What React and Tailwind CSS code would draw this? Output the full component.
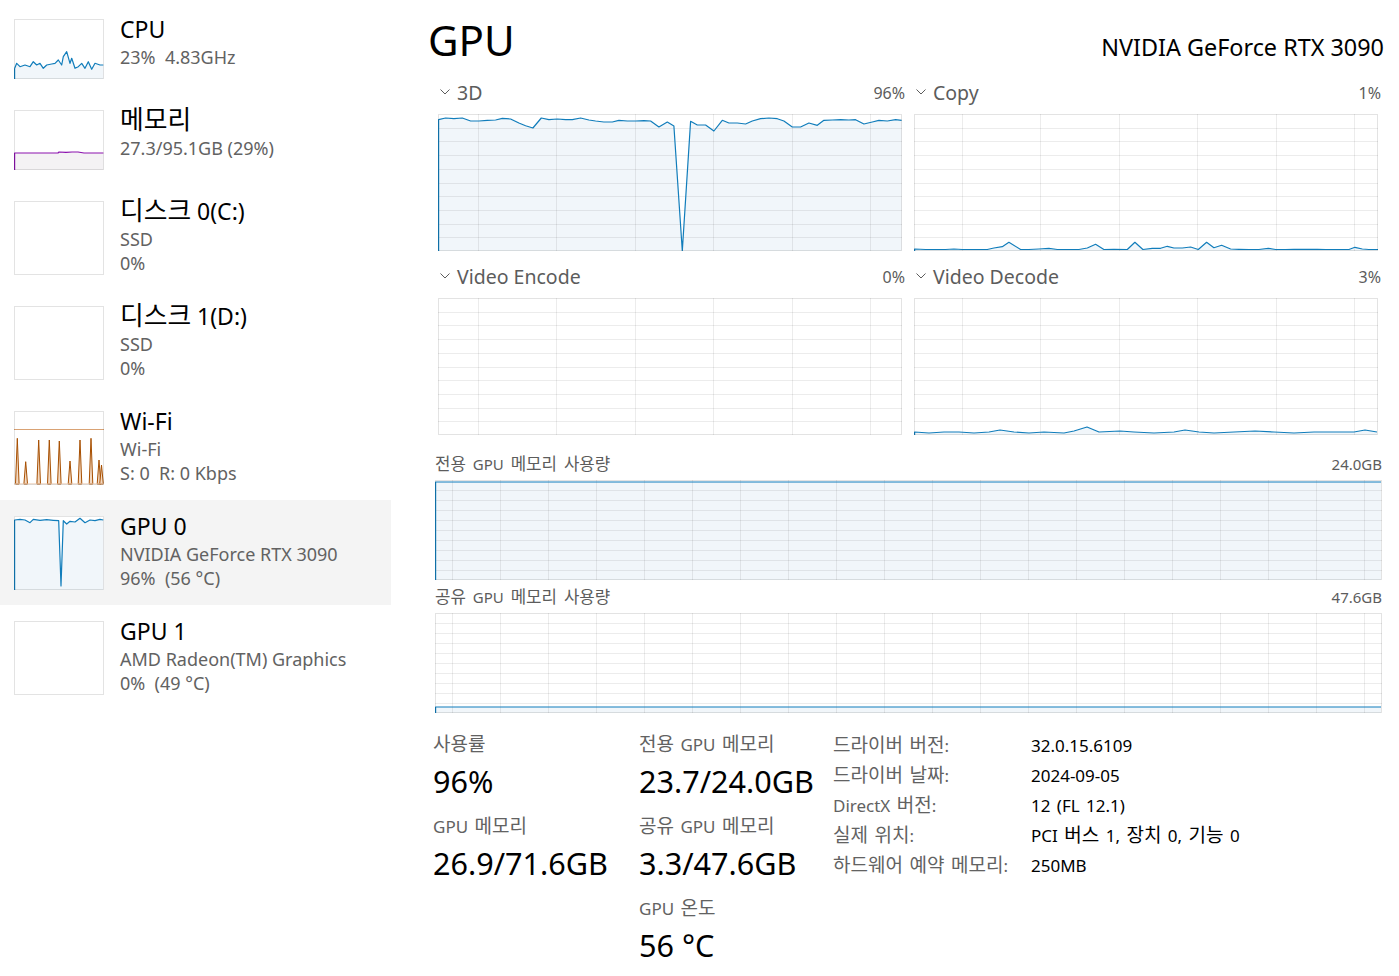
import React from "react";

const BLUE = "#117dbb";
const BLUE_FILL = "#f1f6fa";
const GRID = "rgba(0,0,0,0.075)";
const BORDER = "rgba(0,0,0,0.11)";

function pts(arr) {
  return arr.map(([x, y]) => `${x.toFixed(1)},${y.toFixed(1)}`).join(" ");
}

// Hangul runs are drawn slightly larger, as Malgun Gothic is beside Segoe UI
function K({ children }) {
  const parts = String(children).split(/([\uAC00-\uD7A3]+)/);
  return (
    <>
      {parts.map((p, i) =>
        i % 2 === 1 ? (
          <span key={i} className="text-[1.12em] leading-[0]">
            {p}
          </span>
        ) : (
          <React.Fragment key={i}>{p}</React.Fragment>
        )
      )}
    </>
  );
}

function Chart({ w, h, data, rows = 10, colStep, colOffset = 0, color = BLUE, fill = BLUE_FILL, grid = true, leftEdge = true, children }) {
  const hl = [];
  if (grid) for (let i = 1; i < rows; i++) hl.push(Math.round((h * i) / rows) + 0.5);
  const vl = [];
  if (grid && colStep) for (let x = colOffset; x < w - 1; x += colStep) vl.push(Math.round(x) + 0.5);
  let area = null;
  let line = null;
  if (data) {
    const first = data[0];
    const last = data[data.length - 1];
    area = pts([[first[0], h], ...data, [last[0], h]]);
    line = pts(leftEdge ? [[0.6, h], [0.6, first[1]], ...data] : data);
  }
  return (
    <svg width={w} height={h} className="block shrink-0">
      <rect width={w} height={h} fill="#ffffff" />
      {area && <polygon points={area} fill={fill} />}
      {hl.map((y) => (
        <line key={"h" + y} x1="0" x2={w} y1={y} y2={y} stroke={GRID} />
      ))}
      {vl.map((x) => (
        <line key={"v" + x} x1={x} x2={x} y1="0" y2={h} stroke={GRID} />
      ))}
      {children}
      {line && <polyline points={line} fill="none" stroke={color} strokeWidth="1.2" strokeLinejoin="round" />}
      <rect x="0.5" y="0.5" width={w - 1} height={h - 1} fill="none" stroke={BORDER} />
    </svg>
  );
}

// ---------- data ----------
const d3Raw = [[24,60],[45,55],[70,57],[95,55],[120,64],[145,64],[170,62],[195,61],[215,56],[240,58],[265,70],[285,78],[307,85],[332,55],[355,60],[380,58],[405,60],[425,60],[450,55],[475,61],[495,64],[520,67],[545,67],[565,62],[590,64],[615,64],[640,63],[660,64],[685,82],[710,67],[730,79],[755,453],[780,65],[800,76],[825,76],[850,94],[875,62],[895,70],[920,70],[945,73],[965,64],[990,57],[1015,55],[1040,57],[1060,64],[1085,82],[1110,82],[1135,70],[1160,77],[1180,62],[1205,61],[1230,60],[1255,61],[1275,60],[1300,73],[1325,67],[1345,62],[1370,64],[1395,60],[1413,62]];
const d3 = d3Raw.map(([x, y]) => [(x - 24) / 3 + 0.6, (y - 43) / 3]);

const copyRaw = [[27,448],[60,452],[90,450],[120,452],[145,448],[170,452],[200,451],[245,452],[265,445],[290,441],[310,428],[345,450],[370,452],[400,448],[430,446],[455,451],[490,450],[520,451],[545,445],[570,434],[595,451],[625,449],[665,451],[688,428],[712,451],[740,446],[765,446],[785,440],[805,445],[830,445],[855,442],[878,452],[903,428],[925,444],[948,437],[975,448],[1000,449],[1030,451],[1060,451],[1088,446],[1110,451],[1140,451],[1165,449],[1200,449],[1235,449],[1260,452],[1300,452],[1330,451],[1348,443],[1370,448],[1390,452],[1418,452]];
const copyD = copyRaw.map(([x, y]) => [(x - 27) / 3 + 0.6, Math.min((y - 43) / 3, 135.5)]);

const vdD = [[0.6,134],[15,135],[30,134],[45,134],[60,135],[75,134],[86,132],[100,134],[115,135],[130,134],[150,135],[160,133],[173,129],[185,134],[206,133],[220,134],[240,135],[260,134],[271,132],[285,134],[300,135],[320,134],[341,133],[360,134],[380,135],[400,134],[420,134],[440,134],[451,132],[463,134]];

const cpuRaw = [[44,205],[50,190],[60,200],[75,195],[90,200],[100,185],[110,195],[120,190],[130,205],[140,195],[155,192],[165,190],[175,180],[185,195],[190,170],[200,155],[210,190],[215,175],[225,205],[235,200],[245,190],[255,205],[265,185],[275,208],[285,190],[300,195],[310,195]];
const cpuD = cpuRaw.map(([x, y]) => [(x - 42) / 3, (y - 57) / 3]);

const gpu0Raw = [[44,390],[60,388],[75,390],[90,398],[100,388],[120,391],[140,389],[160,391],[176,392],[183,588],[190,392],[200,402],[210,394],[225,396],[240,385],[255,398],[270,390],[285,392],[300,388],[310,390]];
const gpu0D = gpu0Raw.map(([x, y]) => [(x - 42) / 3, Math.min((y - 378) / 3, 72.5)]);

const memD = [[0.6,43],[44,43],[45,42],[52,42.3],[58,42],[64,42],[70,43],[89.4,43]];

const wifiPeaks = [[3.3,27.3],[11.7,50.7],[24.7,29],[35.3,29],[45.3,30],[56,50],[66,29],[77,27.3],[85,49],[87.5,54]];

function Thumb({ kind, h }) {
  const w = 90;
  if (kind === "cpu") return <Chart w={w} h={h} data={cpuD} grid={false} />;
  if (kind === "gpu0") return <Chart w={w} h={h} data={gpu0D} grid={false} />;
  if (kind === "mem") return <Chart w={w} h={h} data={memD} grid={false} color="#8b12ae" fill="#f4f2f4" />;
  if (kind === "wifi")
    return (
      <Chart w={w} h={h} grid={false}>
        <line x1="0" x2={w} y1="18.5" y2="18.5" stroke="#d9a274" strokeWidth="1" />
        {wifiPeaks.map(([x, y]) => (
          <polygon key={x} points={`${x - 1.8},${h - 1} ${x},${y} ${x + 1.8},${h - 1}`} fill="#f3d9c2" stroke="#a74f01" strokeWidth="1" strokeLinejoin="round" />
        ))}
        <line x1="0" x2={w} y1={h - 1.2} y2={h - 1.2} stroke="#e8c8ac" strokeWidth="0.8" />
      </Chart>
    );
  return <Chart w={w} h={h} grid={false} />;
}

const side = [
  { title: "CPU", lines: ["23%  4.83GHz"], thumb: "cpu", h: 60 },
  { title: "메모리", lines: ["27.3/95.1GB (29%)"], thumb: "mem", h: 60 },
  { title: "디스크 0(C:)", lines: ["SSD", "0%"], thumb: "none", h: 74 },
  { title: "디스크 1(D:)", lines: ["SSD", "0%"], thumb: "none", h: 74 },
  { title: "Wi-Fi", lines: ["Wi-Fi", "S: 0  R: 0 Kbps"], thumb: "wifi", h: 74 },
  { title: "GPU 0", lines: ["NVIDIA GeForce RTX 3090", "96%  (56 °C)"], thumb: "gpu0", h: 74, selected: true },
  { title: "GPU 1", lines: ["AMD Radeon(TM) Graphics", "0%  (49 °C)"], thumb: "none", h: 74 },
];

function SideItem({ item }) {
  return (
    <div className={item.selected ? "flex bg-[#f4f4f4] pl-[14px] pt-[16px] pb-[15px]" : "flex pl-[14px] pt-[16px] pb-[15px]"}>
      <div className="w-[90px] shrink-0">
        <Thumb kind={item.thumb} h={item.h} />
      </div>
      <div className="ml-[16px] flex flex-col">
        <div className="h-[20px] whitespace-pre text-[23px] leading-[20px] text-black">
          <K>{item.title}</K>
        </div>
        <div className="mt-[6px] whitespace-pre text-[18px] leading-[24px] text-[#626262]">{item.lines[0]}</div>
        {item.lines[1] && <div className="whitespace-pre text-[18px] leading-[24px] text-[#626262]">{item.lines[1]}</div>}
      </div>
    </div>
  );
}

function Chevron() {
  return (
    <svg width="10" height="6" className="mb-[3px] ml-[2px] mr-[7px] block">
      <polyline points="0.5,0.5 5,5 9.5,0.5" fill="none" stroke="#5c5c5c" strokeWidth="1" />
    </svg>
  );
}

function EngineCell({ name, pct, data, offset, gapClass }) {
  return (
    <div className={gapClass}>
      <div className="flex h-[24px] items-center justify-between">
        <div className="flex items-center">
          <Chevron />
          <span className="text-[19.5px] leading-[24px] text-[#5c5c5c]">{name}</span>
        </div>
        <span className="text-[16px] leading-[24px] text-[#5c5c5c]">{pct}</span>
      </div>
      <div className="mt-[9px]">
        <Chart w={464} h={137} data={data} colStep={78.5} colOffset={offset} />
      </div>
    </div>
  );
}

function Stat({ label, value, first }) {
  return (
    <div className={first ? "" : "mt-[14px]"}>
      <div className="h-[24px] whitespace-pre text-[17px] leading-[24px] text-[#626262] [word-spacing:2px]">
        <K>{label}</K>
      </div>
      <div className="mt-[4px] text-[30.6px] leading-[40px] text-black">{value}</div>
    </div>
  );
}

const info = [
  ["드라이버 버전:", "32.0.15.6109"],
  ["드라이버 날짜:", "2024-09-05"],
  ["DirectX 버전:", "12 (FL 12.1)"],
  ["실제 위치:", "PCI 버스 1, 장치 0, 기능 0"],
  ["하드웨어 예약 메모리:", "250MB"],
];

export default function App() {
  return (
    <div className="flex h-[976px] w-[1399px] overflow-hidden bg-white font-['Noto_Sans','Noto_Sans_CJK_KR',sans-serif]">
      <aside className="w-[391px] shrink-0 pt-[3px]">
        {side.map((it) => (
          <SideItem key={it.title} item={it} />
        ))}
      </aside>

      <main className="flex-1 pl-[39px] pr-[15px]">
        <div className="flex h-[81px] items-baseline justify-between pt-[12px]">
          <div className="-ml-[2px] text-[42px] leading-[56px] text-black">GPU</div>
          <div className="text-[23.4px] leading-[28px] text-black">NVIDIA GeForce RTX 3090</div>
        </div>

        <div className="ml-[8px] mr-[3px] grid grid-cols-2 gap-x-[9px]">
          <EngineCell name="3D" pct="96%" data={d3} offset={39.7} gapClass="" />
          <EngineCell name="Copy" pct="1%" data={copyD} offset={47.7} gapClass="" />
          <EngineCell name="Video Encode" pct="0%" data={null} offset={39.7} gapClass="mt-[14px]" />
          <EngineCell name="Video Decode" pct="3%" data={vdD} offset={47.7} gapClass="mt-[14px]" />
        </div>

        <div className="ml-[5px] mr-[2px] mt-[19px]">
          <div className="flex h-[20px] items-center justify-between whitespace-pre text-[15px] leading-[20px] text-[#5c5c5c]">
            <span className="[word-spacing:3px]">
              <K>전용 GPU 메모리 사용량</K>
            </span>
            <span>24.0GB</span>
          </div>
          <div className="mt-[6px]">
            <Chart w={947} h={100} data={[[0.6, 2], [946, 2]]} colStep={48} colOffset={16.7} />
          </div>
          <div className="mt-[7px] flex h-[20px] items-center justify-between whitespace-pre text-[15px] leading-[20px] text-[#5c5c5c]">
            <span className="[word-spacing:3px]">
              <K>공유 GPU 메모리 사용량</K>
            </span>
            <span>47.6GB</span>
          </div>
          <div className="mt-[6px]">
            <Chart w={947} h={100} data={[[0.6, 94], [946, 94]]} colStep={48} colOffset={16.7} />
          </div>
        </div>

        <div className="ml-[3px] mt-[20px] flex">
          <div className="w-[206px] shrink-0">
            <Stat first label="사용률" value="96%" />
            <Stat label="GPU 메모리" value="26.9/71.6GB" />
          </div>
          <div className="w-[194px] shrink-0">
            <Stat first label="전용 GPU 메모리" value="23.7/24.0GB" />
            <Stat label="공유 GPU 메모리" value="3.3/47.6GB" />
            <Stat label="GPU 온도" value="56 °C" />
          </div>
          <div className="-mt-[2px] flex flex-col">
            {info.map(([k, v]) => (
              <div key={k} className="flex h-[30px] whitespace-pre text-[17px] leading-[30px] [word-spacing:2px]">
                <span className="w-[198px] shrink-0 text-[#626262]">
                  <K>{k}</K>
                </span>
                <span className="text-black">
                  <K>{v}</K>
                </span>
              </div>
            ))}
          </div>
        </div>
      </main>
    </div>
  );
}
